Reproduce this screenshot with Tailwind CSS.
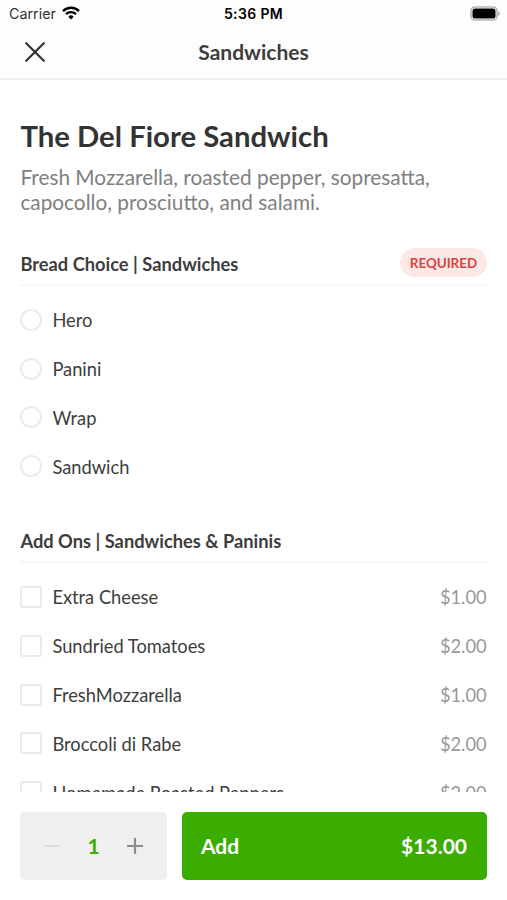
<!DOCTYPE html>
<html lang="en">
<head>
<meta charset="utf-8">
<title>Sandwiches</title>
<script src="https://cdn.jsdelivr.net/npm/@tailwindcss/browser@4"></script>
</head>
<body class="bg-white">
<div class="flex h-[900px] w-[507px] flex-col overflow-hidden bg-white font-['Lato',sans-serif] text-[#3d3d3d]">
  <header class="h-20 shrink-0 border-b-2 border-[#f0f0f0] bg-[#fdfdfd]">
    <div class="grid h-7 grid-cols-3 items-center pr-[6px] pl-[9px] font-['Inter',sans-serif] text-black">
      <div class="flex items-center gap-[6px]">
        <span class="text-[14.300px] leading-7 text-[#333]">Carrier</span>
        <svg class="-mt-[2px] h-[14px] w-[18px]" viewBox="0 0 18 14" fill="none" stroke="#000" stroke-width="2.4"><path d="M1 5.1a11.4 11.4 0 0 1 16 0M4 8.2a7.1 7.1 0 0 1 10 0"/><path d="M9 13.4 6.3 10.7a3.8 3.8 0 0 1 5.4 0z" fill="#000" stroke="none"/></svg>
      </div>
      <span class="-mt-[2px] -ml-[3px] text-center text-[14px] font-semibold tracking-[0.350px] whitespace-nowrap">5:36 PM</span>
      <svg class="-mt-[2px] h-[15px] w-[31px] justify-self-end" viewBox="0 0 31 15"><rect x="1" y="1" width="26" height="13" rx="4" fill="#fff" stroke="#b5b5b5" stroke-width="1.6"/><rect x="2.500" y="2.500" width="23" height="10" rx="2.500" fill="#000"/><path d="M28 5.200c2.600.8 2.600 3.800 0 4.600z" fill="#b5b5b5"/></svg>
    </div>
    <div class="grid h-12 grid-cols-[60px_1fr_60px] items-center">
      <svg class="ml-[25px] h-5 w-5" viewBox="0 0 20 20" fill="none" stroke="#333" stroke-width="2.2" stroke-linecap="round"><path d="m1.200 1.200 17.600 17.600M18.800 1.200 1.200 18.800"/></svg>
      <h1 class="text-center text-[21px] font-bold">Sandwiches</h1>
    </div>
  </header>

  <main class="min-h-0 flex-1 overflow-hidden px-[20.400px]">
    <h2 class="mt-[37px] text-[29.300px] leading-[38px] font-bold text-[#333]">The Del Fiore Sandwich</h2>
    <p class="mt-[9px] text-[20.800px] leading-[25px] whitespace-nowrap text-[#808080]">Fresh Mozzarella, roasted pepper, sopresatta,<br>capocollo, prosciutto, and salami.</p>

    <section>
      <div class="mt-[34px] flex h-[38px] items-start justify-between border-b-2 border-[#f7f7f7]">
        <h3 class="mt-[1px] text-[18.300px] leading-[30px] font-bold">Bread Choice | Sandwiches</h3>
        <span class="h-[29px] rounded-full bg-[#fde8e8] px-[9.500px] text-[13.400px] leading-[30px] font-bold text-[#dc4040]">REQUIRED</span>
      </div>
      <ul class="mt-[10.500px] text-[18.300px]">
        <li class="flex h-[48.800px] items-center gap-[10px]"><i class="-mt-[2px] size-[22px] rounded-full border-2 border-[#ebebeb]"></i>Hero</li>
        <li class="flex h-[48.800px] items-center gap-[10px]"><i class="-mt-[2px] size-[22px] rounded-full border-2 border-[#ebebeb]"></i>Panini</li>
        <li class="flex h-[48.800px] items-center gap-[10px]"><i class="-mt-[2px] size-[22px] rounded-full border-2 border-[#ebebeb]"></i>Wrap</li>
        <li class="flex h-[48.800px] items-center gap-[10px]"><i class="-mt-[2px] size-[22px] rounded-full border-2 border-[#ebebeb]"></i>Sandwich</li>
      </ul>
    </section>

    <section>
      <div class="mt-[34.500px] h-[37px] border-b-2 border-[#f7f7f7]">
        <h3 class="text-[18.300px] leading-[30px] font-bold">Add Ons | Sandwiches &amp; Paninis</h3>
      </div>
      <ul class="mt-[10.500px] text-[18.300px]">
        <li class="flex h-[48.800px] items-center gap-[10px]"><i class="-mt-[2px] size-[22px] rounded-[3px] border-2 border-[#ebebeb]"></i>Extra Cheese<span class="ml-auto text-[#999]">$1.00</span></li>
        <li class="flex h-[48.800px] items-center gap-[10px]"><i class="-mt-[2px] size-[22px] rounded-[3px] border-2 border-[#ebebeb]"></i>Sundried Tomatoes<span class="ml-auto text-[#999]">$2.00</span></li>
        <li class="flex h-[48.800px] items-center gap-[10px]"><i class="-mt-[2px] size-[22px] rounded-[3px] border-2 border-[#ebebeb]"></i>FreshMozzarella<span class="ml-auto text-[#999]">$1.00</span></li>
        <li class="flex h-[48.800px] items-center gap-[10px]"><i class="-mt-[2px] size-[22px] rounded-[3px] border-2 border-[#ebebeb]"></i>Broccoli di Rabe<span class="ml-auto text-[#999]">$2.00</span></li>
        <li class="flex h-[48.800px] items-center gap-[10px]"><i class="-mt-[2px] size-[22px] rounded-[3px] border-2 border-[#ebebeb]"></i>Homemade Roasted Peppers<span class="ml-auto text-[#999]">$2.00</span></li>
      </ul>
    </section>
  </main>

  <footer class="flex h-[108px] shrink-0 gap-[15px] bg-white px-[20px] pt-5 text-[21px] font-bold">
    <div class="flex h-[68px] w-[147px] items-center justify-between rounded-[5px] bg-[#efefef] px-6">
      <svg class="size-4" viewBox="0 0 16 16" stroke="#dadada" stroke-width="2"><path d="M0 8h16"/></svg>
      <span class="text-[#3aad00]">1</span>
      <svg class="size-4" viewBox="0 0 16 16" stroke="#8c8c8c" stroke-width="2.200"><path d="M0 8h16M8 0v16"/></svg>
    </div>
    <button class="flex h-[68px] flex-1 items-center justify-between rounded-[5px] bg-[#3aad00] pr-5 pl-[19px] text-white"><span>Add</span><span>$13.00</span></button>
  </footer>
</div>
</body>
</html>
